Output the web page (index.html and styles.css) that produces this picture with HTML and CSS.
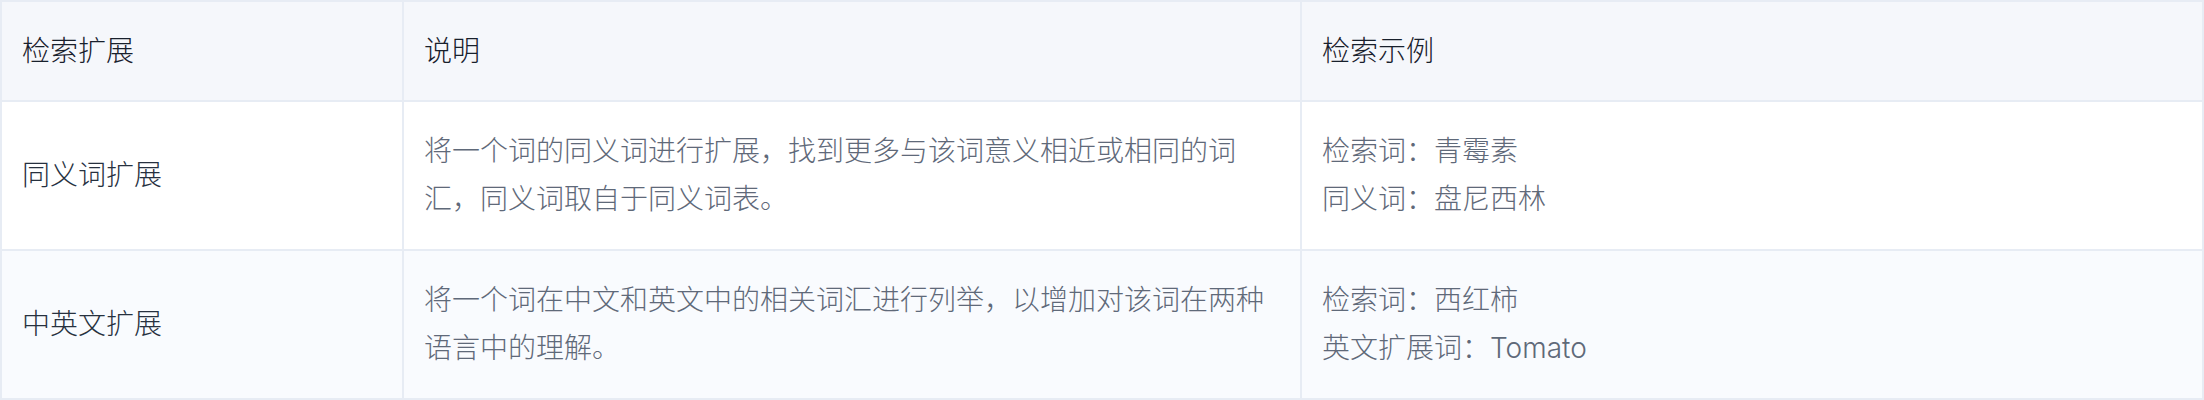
FILE: index.html
```html
<!DOCTYPE html>
<html lang="zh-CN">
<head>
    <meta charset="UTF-8">
    <meta name="viewport" content="width=device-width, initial-scale=1.0">
    <title>检索扩展</title>
    <link rel="stylesheet" href="styles.css">
</head>
<body>
    <table class="expand-table">
        <colgroup>
            <col class="col-name">
            <col class="col-desc">
            <col class="col-example">
        </colgroup>
        <thead>
            <tr>
                <th>检索扩展</th>
                <th>说明</th>
                <th>检索示例</th>
            </tr>
        </thead>
        <tbody>
            <tr>
                <td class="name">同义词扩展</td>
                <td class="desc">将一个词的同义词进行扩展，找到更多与该词意义相近或相同的词汇，同义词取自于同义词表。</td>
                <td class="desc">检索词：青霉素<br>同义词：盘尼西林</td>
            </tr>
            <tr>
                <td class="name">中英文扩展</td>
                <td class="desc">将一个词在中文和英文中的相关词汇进行列举，以增加对该词在两种语言中的理解。</td>
                <td class="desc">检索词：西红柿<br>英文扩展词：Tomato</td>
            </tr>
        </tbody>
    </table>
</body>
</html>
```

FILE: styles.css
```css
body {
    margin: 0;
    font-family: Inter, "Noto Sans CJK SC", sans-serif;
    background-color: #fff;
}
.expand-table {
    width: 2204px;
    border-collapse: collapse;
    table-layout: fixed;
    font-size: 28px;
    font-weight: 300;
    line-height: 48px;
}
.col-name {
    width: 402px;
}
.col-desc {
    width: 898px;
}
.expand-table th,
.expand-table td {
    border: 2px solid #e7ecf4;
    padding: 25px 20px 26px;
    text-align: left;
    vertical-align: middle;
    font-weight: 300;
}
.expand-table th {
    padding: 25px 20px;
    background-color: #f5f7fb;
    color: #18202c;
}
.expand-table tbody tr:nth-child(even) td {
    background-color: #f9fbfe;
}
.expand-table td.name {
    color: #27313f;
}
.expand-table td.desc {
    color: #5f6979;
}
```
